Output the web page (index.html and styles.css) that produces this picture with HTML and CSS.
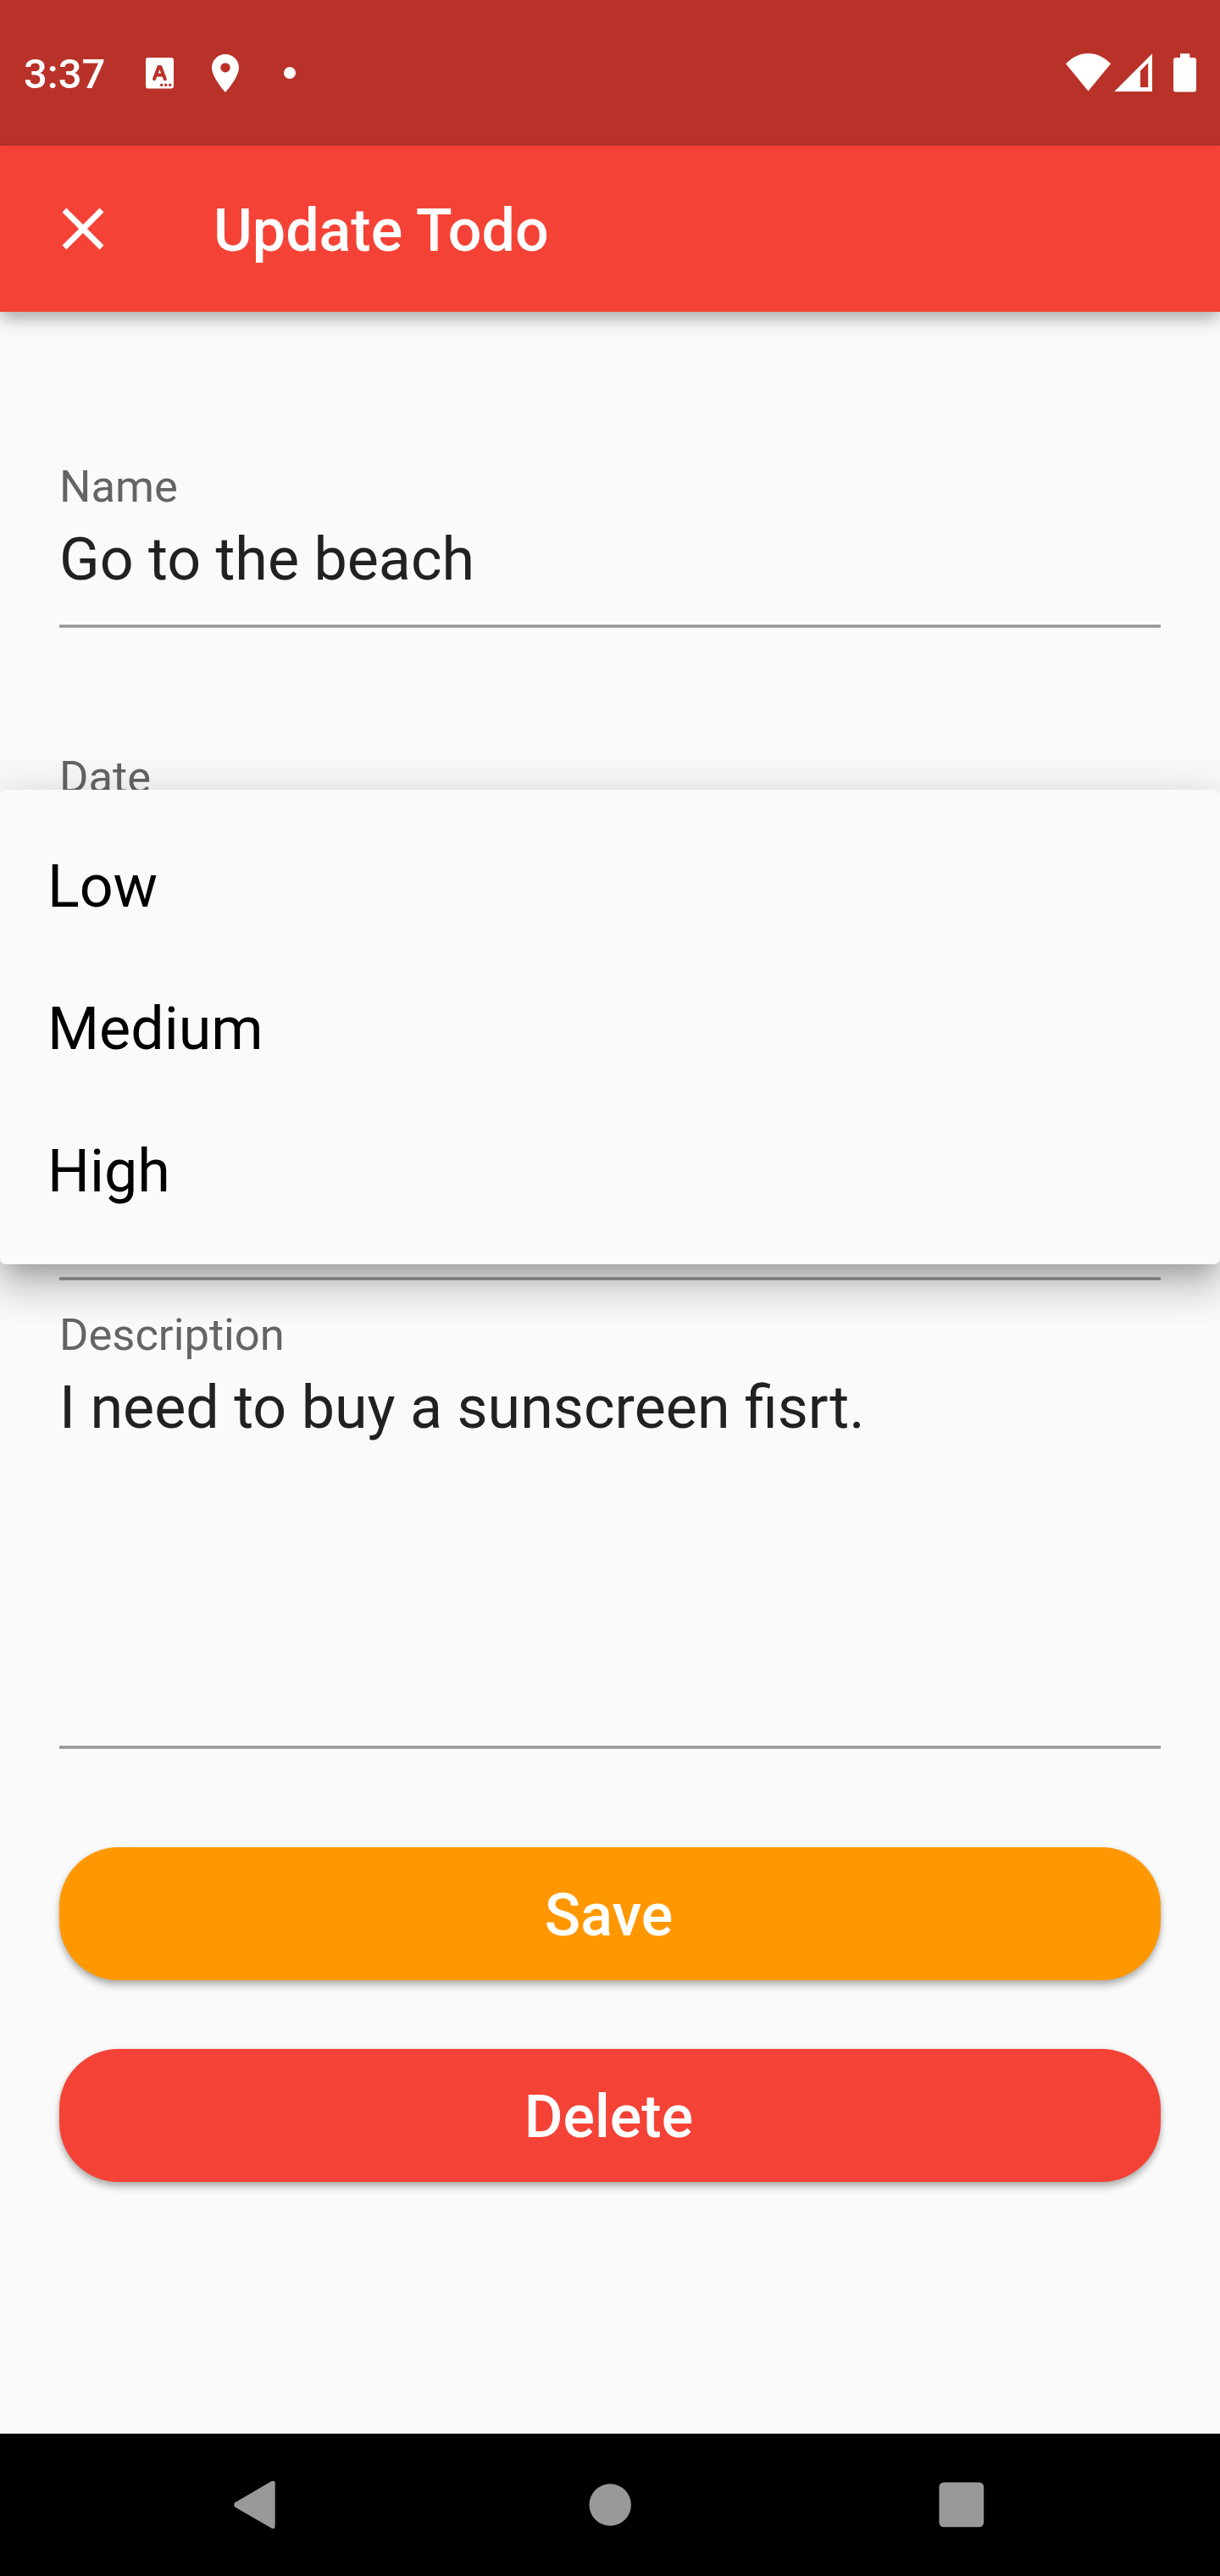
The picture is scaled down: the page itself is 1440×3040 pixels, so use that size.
FILE: index.html
```html
<!DOCTYPE html>
<html lang="en">
<head>
<meta charset="utf-8">
<title>Update Todo</title>
<link rel="stylesheet" href="styles.css">
</head>
<body>
<div class="screen">
  <header class="status-bar">
    <span class="clock">3:37</span>
    <svg class="icon-app" width="33" height="37" viewBox="0 0 33 37">
      <rect width="33" height="36.6" rx="3" fill="#fff"/>
      <path d="M10 25.3 15.4 11h2L22.800 25.300M12.600 20.600h7.600" fill="none" stroke="#b93229" stroke-width="4" stroke-linecap="round" stroke-linejoin="round"/>
      <circle cx="18.700" cy="32.300" r="1.700" fill="#b93229"/><circle cx="23.700" cy="32.300" r="1.700" fill="#b93229"/><circle cx="28.700" cy="32.300" r="1.700" fill="#b93229"/>
    </svg>
    <svg class="icon-pin" width="32" height="45" viewBox="5 2 14 20" preserveAspectRatio="none">
      <path d="M12 2C8.130 2 5 5.130 5 9c0 5.250 7 13 7 13s7-7.750 7-13c0-3.870-3.130-7-7-7zm0 9.500a2.500 2.500 0 0 1 0-5 2.500 2.500 0 0 1 0 5z" fill="#fff"/>
    </svg>
    <span class="dot"></span>
    <svg class="icon-system" width="156" height="46" viewBox="1256 63 156 46" fill="#fff">
      <path d="M1284.400 107.400 1258 75.200C1265.500 67.500 1274.500 63 1284.400 63S1303.500 67.500 1311 75.200Z"/>
      <path fill-rule="evenodd" d="M1315.300 108H1360V63.300ZM1346 103V83.500L1355.200 74.300V103Z"/>
      <path d="M1393 63.300h11.300V68h4.700a3 3 0 0 1 3 3v34.600a3 3 0 0 1-3 3h-21a3 3 0 0 1-3-3V71a3 3 0 0 1 3-3h5Z"/>
    </svg>
  </header>
  <div class="app-bar">
    <svg class="icon-close" width="84" height="84" viewBox="0 0 24 24" fill="#fff">
      <path d="M19 6.410 17.590 5 12 10.590 6.410 5 5 6.410 10.590 12 5 17.590 6.410 19 12 13.410 17.590 19 19 17.590 13.410 12z"/>
    </svg>
    <h1 class="title">Update Todo</h1>
  </div>
  <main class="form">
    <div class="field">
      <div class="label">Name</div>
      <div class="value">Go to the beach</div>
    </div>
    <div class="field field-date">
      <div class="label">Date</div>
    </div>
    <div class="field field-description">
      <div class="label">Description</div>
      <div class="value">I need to buy a sunscreen fisrt.</div>
    </div>
    <div class="actions">
      <button class="button save"><span>Save</span></button>
      <button class="button delete"><span>Delete</span></button>
    </div>
  </main>
  <ul class="menu">
    <li>Low</li>
    <li>Medium</li>
    <li>High</li>
  </ul>
  <nav class="nav-bar">
    <svg width="1440" height="168" viewBox="0 2872 1440 168" fill="#999">
      <path d="M277.500 2953.300 320.300 2928.300Q324.700 2926.300 324.700 2931V2981Q324.700 2985.500 320.300 2983.500L277.500 2958.700Q275 2956 277.500 2953.300Z"/>
      <circle cx="720.200" cy="2956" r="24.700"/>
      <rect x="1108.500" y="2929.500" width="52.700" height="52.800" rx="5.500"/>
    </svg>
  </nav>
</div>
</body>
</html>
```
FILE: styles.css
```css
* { box-sizing: border-box; }
body { margin: 0; background: #fafafa; font-family: Roboto, sans-serif; }
.screen {
  position: relative;
  display: flex;
  flex-direction: column;
  width: 1440px;
  height: 3040px;
  overflow: hidden;
  background: #fafafa;
}
.status-bar {
  display: flex;
  align-items: center;
  height: 172px;
  padding: 0 28px;
  background: #b93229;
  color: #fff;
}
.clock {
  width: 97px;
  margin-right: 47px;
  padding-top: 4px;
  font-size: 49px;
  font-weight: 500;
  line-height: 60px;
}
.icon-app { margin-right: 44.5px; }
.icon-pin { margin-right: 53.5px; }
.dot { width: 14px; height: 14px; border-radius: 50%; background: #fff; }
.icon-system { margin-left: auto; }
.app-bar {
  z-index: 1;
  display: flex;
  align-items: center;
  height: 196px;
  padding-left: 56px;
  background: #f44336;
  color: #fff;
  box-shadow: 0 14px 20px -3px rgba(0, 0, 0, .18), 0 6px 14px rgba(0, 0, 0, .15);
}
.title {
  margin: 0 0 0 112px;
  padding-top: 4px;
  font-size: 70px;
  font-weight: 500;
  line-height: 84px;
}
.form {
  display: flex;
  flex: 1;
  flex-direction: column;
  padding: 176px 70px 0;
}
.field {
  height: 197px;
  background: linear-gradient(#adadad 1px, #979797 1px 3px, #adadad 3px) bottom / 100% 4px no-repeat;
}
.field-date { height: 624px; margin-top: 146px; }
.field-description { height: 519px; margin-top: 34px; }
.label { color: #646464; font-size: 52.5px; line-height: 60px; }
.value { margin-top: 14px; color: #212121; font-size: 70px; line-height: 84px; }
.actions {
  display: flex;
  flex-direction: column;
  gap: 80.5px;
  margin-top: 115.5px;
}
.button {
  height: 157.5px;
  padding: 4px 3px 0 0;
  border: 0;
  border-radius: 70px;
  color: #fff;
  font: 500 70px/84px Roboto, sans-serif;
  box-shadow: 0 7px 9px rgba(0, 0, 0, .2), 0 2px 6px rgba(0, 0, 0, .16);
}
.save { background: #ff9800; }
.delete { background: #f44336; }
.menu {
  position: absolute;
  z-index: 2;
  top: 932px;
  left: 0;
  width: 1440px;
  margin: 0;
  padding: 28px 0;
  border-radius: 7px;
  background: #fafafa;
  list-style: none;
  box-shadow:
    0 17.5px 23.7px -10.5px rgba(0, 0, 0, .2),
    0 28px 43.9px 3.5px rgba(0, 0, 0, .14),
    0 10.5px 60px 7px rgba(0, 0, 0, .12);
}
.menu li {
  height: 168px;
  padding: 4px 56px 0;
  color: #000;
  font-size: 70px;
  line-height: 164px;
}
.nav-bar { height: 168px; background: #000; }
.nav-bar svg { display: block; }
```
